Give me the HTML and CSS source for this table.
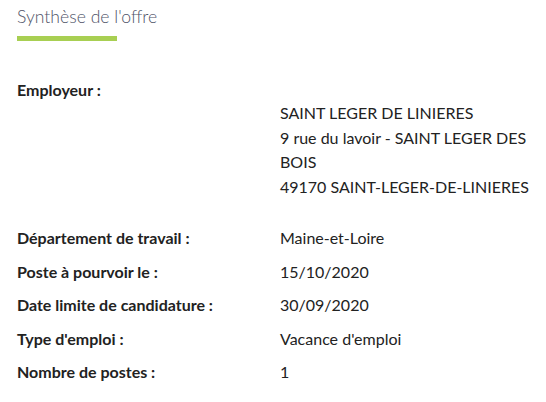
FILE: index.html
```html
<!DOCTYPE html>
<html lang="fr">
<head>
<meta charset="utf-8">
<link rel="stylesheet" href="styles.css">
</head>
<body>
<section class="synthese">
  <h2 class="title">Synthèse de l'offre</h2>
  <div class="bar"></div>
  <div class="employer">
    <div class="label">Employeur :</div>
    <div class="address">
      <div>SAINT LEGER DE LINIERES</div>
      <div>9 rue du lavoir - SAINT LEGER DES BOIS</div>
      <div>49170 SAINT-LEGER-DE-LINIERES</div>
    </div>
  </div>
  <dl class="details">
    <dt class="label">Département de travail :</dt><dd class="value">Maine-et-Loire</dd>
    <dt class="label">Poste à pourvoir le :</dt><dd class="value">15/10/2020</dd>
    <dt class="label">Date limite de candidature :</dt><dd class="value">30/09/2020</dd>
    <dt class="label">Type d'emploi :</dt><dd class="value">Vacance d'emploi</dd>
    <dt class="label">Nombre de postes :</dt><dd class="value">1</dd>
  </dl>
</section>
</body>
</html>
```
FILE: styles.css
```css
html, body {
  margin: 0;
  padding: 0;
  background: #fff;
}
body {
  font-family: Lato, "Open Sans", sans-serif;
  color: #222;
}
.synthese {
  padding: 5px 0 0 17px;
}
.title {
  margin: 0;
  font-size: 17.6px;
  font-weight: 300;
  color: #4f5468;
  line-height: 24px;
}
.bar {
  width: 100px;
  height: 5px;
  background: #a8cf52;
  margin-top: 7px;
}
.label {
  font-weight: 700;
  font-size: 16px;
}
.employer {
  margin-top: 38px;
}
.employer .label {
  line-height: 22px;
}
.address {
  margin-left: 263px;
  width: 250px;
  font-size: 16px;
  line-height: 24.5px;
}
.details {
  display: grid;
  grid-template-columns: 263px 1fr;
  row-gap: 9.5px;
  margin: 27px 0 0;
  line-height: 24px;
}
.details dd {
  margin: 0;
  font-size: 16px;
}
```
